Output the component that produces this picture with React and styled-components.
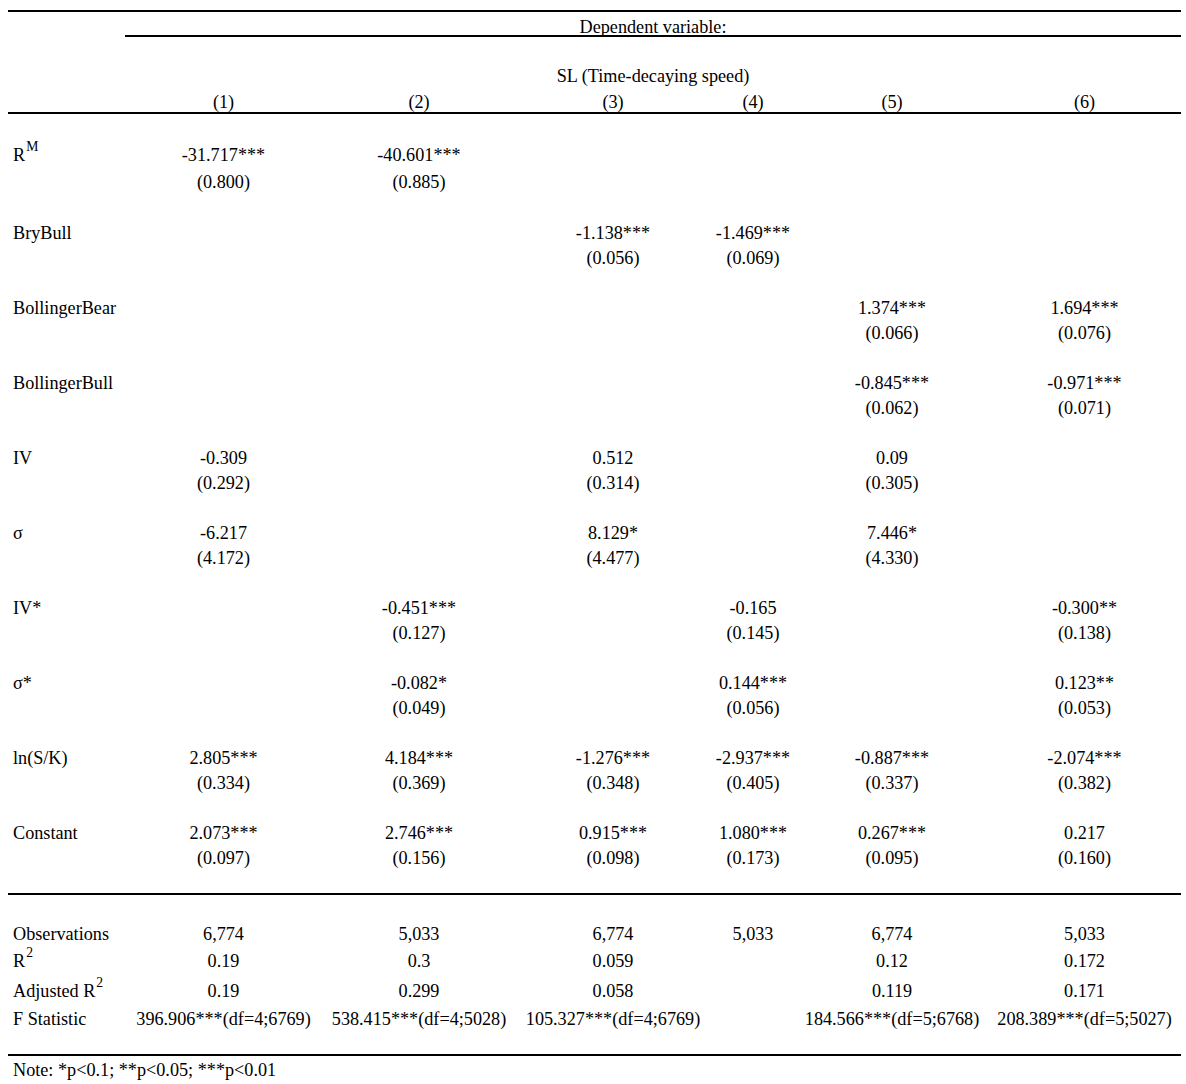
import React from 'react'
import styled, { createGlobalStyle } from 'styled-components'

const GlobalStyle = createGlobalStyle`
  html, body {
    margin: 0;
    padding: 0;
    background: #fff;
    overflow: hidden;
  }
  body {
    font-family: "Liberation Serif", "Times New Roman", serif;
    font-size: 18.2px;
    color: #000;
  }
`;

const Page = styled.div`
  padding: 10px 0 0 8px;
`;

const Table = styled.table`
  width: 1173px;
  table-layout: fixed;
  border-collapse: separate;
  border-spacing: 0;
`;

const Row = styled.tr`
  height: ${p => p.$h || 25}px;
`;

const Cell = styled.td`
  padding: ${p => p.$pt ?? 2}px 0 0 0;
  text-align: center;
  vertical-align: middle;
  white-space: nowrap;
  line-height: ${p => p.$lh || 20}px;
`;

const Label = styled(Cell)`
  text-align: left;
  padding-left: 5px;
`;

const RuleRow = styled.tr`
  height: 2px;
`;

const Rule = styled.td`
  padding: 0;
  height: 2px;
  font-size: 0;
  line-height: 0;
  background: ${p => (p.$blank ? 'transparent' : '#000')};
`;

const Sup = styled.sup`
  font-size: 0.75em;
  vertical-align: 10px;
  line-height: 0;
  margin-left: 1px;
`;

const widths = [117, 197, 194, 194, 86, 192, 193]

const coefs = [
  { label: <>R<Sup>M</Sup></>, h: 28, se: 26,
    c: ['-31.717***', '-40.601***', '', '', '', ''],
    s: ['(0.800)', '(0.885)', '', '', '', ''] },
  { label: 'BryBull',
    c: ['', '', '-1.138***', '-1.469***', '', ''],
    s: ['', '', '(0.056)', '(0.069)', '', ''] },
  { label: 'BollingerBear',
    c: ['', '', '', '', '1.374***', '1.694***'],
    s: ['', '', '', '', '(0.066)', '(0.076)'] },
  { label: 'BollingerBull',
    c: ['', '', '', '', '-0.845***', '-0.971***'],
    s: ['', '', '', '', '(0.062)', '(0.071)'] },
  { label: 'IV',
    c: ['-0.309', '', '0.512', '', '0.09', ''],
    s: ['(0.292)', '', '(0.314)', '', '(0.305)', ''] },
  { label: 'σ',
    c: ['-6.217', '', '8.129*', '', '7.446*', ''],
    s: ['(4.172)', '', '(4.477)', '', '(4.330)', ''] },
  { label: 'IV*',
    c: ['', '-0.451***', '', '-0.165', '', '-0.300**'],
    s: ['', '(0.127)', '', '(0.145)', '', '(0.138)'] },
  { label: 'σ*',
    c: ['', '-0.082*', '', '0.144***', '', '0.123**'],
    s: ['', '(0.049)', '', '(0.056)', '', '(0.053)'] },
  { label: 'ln(S/K)',
    c: ['2.805***', '4.184***', '-1.276***', '-2.937***', '-0.887***', '-2.074***'],
    s: ['(0.334)', '(0.369)', '(0.348)', '(0.405)', '(0.337)', '(0.382)'] },
  { label: 'Constant',
    c: ['2.073***', '2.746***', '0.915***', '1.080***', '0.267***', '0.217'],
    s: ['(0.097)', '(0.156)', '(0.098)', '(0.173)', '(0.095)', '(0.160)'] },
]

const stats = [
  { label: 'Observations', h: 25,
    v: ['6,774', '5,033', '6,774', '5,033', '6,774', '5,033'] },
  { label: <>R<Sup>2</Sup></>, h: 29,
    v: ['0.19', '0.3', '0.059', '', '0.12', '0.172'] },
  { label: <>Adjusted R<Sup>2</Sup></>, h: 31,
    v: ['0.19', '0.299', '0.058', '', '0.119', '0.171'] },
  { label: 'F Statistic', h: 26,
    v: ['396.906***(df=4;6769)', '538.415***(df=4;5028)', '105.327***(df=4;6769)', '',
      '184.566***(df=5;6768)', '208.389***(df=5;5027)'] },
]

function ValueRow({ label, values, h, pt }) {
  return (
    <Row $h={h}>
      <Label $pt={pt}>{label}</Label>
      {values.map((v, i) => <Cell key={i} $pt={pt}>{v}</Cell>)}
    </Row>
  )
}

function Blank({ h }) {
  return (
    <Row $h={h}>
      <Cell colSpan={7} $pt={0} />
    </Row>
  )
}

function App() {
  return (
    <Page>
      <GlobalStyle />
      <Table>
        <colgroup>
          {widths.map((w, i) => <col key={i} style={{ width: w }} />)}
        </colgroup>
        <tbody>
          <RuleRow><Rule colSpan={7} /></RuleRow>
          <Row $h={23}>
            <Cell $pt={7} $lh={16} />
            <Cell colSpan={6} $pt={7} $lh={16}>Dependent variable:</Cell>
          </Row>
          <RuleRow><Rule $blank /><Rule colSpan={6} /></RuleRow>
          <Blank h={26} />
          <Row $h={25}>
            <Cell $pt={0} />
            <Cell colSpan={6} $pt={0}>SL (Time-decaying speed)</Cell>
          </Row>
          <ValueRow h={24} pt={4} label="" values={['(1)', '(2)', '(3)', '(4)', '(5)', '(6)']} />
          <RuleRow><Rule colSpan={7} /></RuleRow>
          <Blank h={26} />

          {coefs.map((r, i) => (
            <React.Fragment key={i}>
              <ValueRow h={r.h || 25} label={r.label} values={r.c} />
              <ValueRow h={r.se || 25} label="" values={r.s} />
              <Blank h={i === coefs.length - 1 ? 24 : 25} />
            </React.Fragment>
          ))}

          <RuleRow><Rule colSpan={7} /></RuleRow>
          <Blank h={25} />
          {stats.map((r, i) => (
            <ValueRow key={i} h={r.h} label={r.label} values={r.v} pt={i === 3 ? 1 : 2} />
          ))}
          <Blank h={23} />
          <RuleRow><Rule colSpan={7} /></RuleRow>
          <Row $h={26}>
            <Label colSpan={7} $pt={1}>Note: *p&lt;0.1; **p&lt;0.05; ***p&lt;0.01</Label>
          </Row>
        </tbody>
      </Table>
    </Page>
  )
}

export default App
